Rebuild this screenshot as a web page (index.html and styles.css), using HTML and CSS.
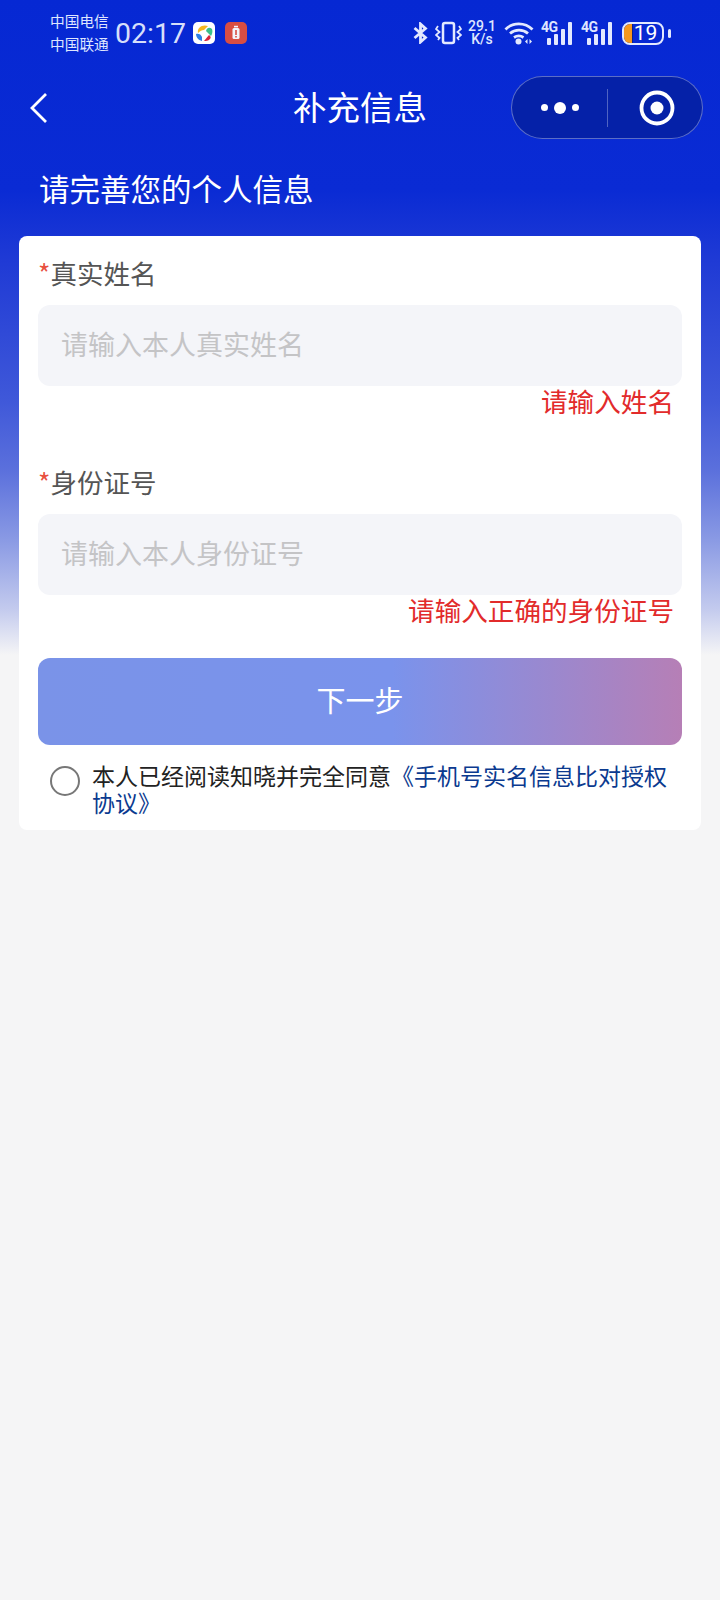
FILE: index.html
```html
<!DOCTYPE html>
<html lang="zh-CN">

<head>
    <meta charset="UTF-8">
    <meta name="viewport" content="width=device-width, initial-scale=1.0">
    <title>补充信息</title>
    <link rel="stylesheet" href="styles.css">
</head>

<body>
    <!-- status bar -->
    <div class="status-bar">
        <div class="carriers">
            <span>中国电信</span>
            <span>中国联通</span>
        </div>
        <div class="clock">02:17</div>
        <svg class="app-icon" width="22" height="22" viewBox="0 0 22 22">
            <rect width="22" height="22" rx="5" fill="#fff" />
            <path d="M5 11C4 6 9 2 15 4L11 8C9 8 7 9 5 11Z" fill="#f5b81f" />
            <path d="M13 9C14 5 17 5 19 7C20 10 19 12 18 14L13 9Z" fill="#3cc08a" />
            <path d="M3 12C5 11 8 12 9 15L9 19C5 18 3 15 3 12Z" fill="#2d7fe6" />
            <path d="M11 19L16 13C18 14 18 16 17 17C15 19 13 19 11 19Z" fill="#d8263c" />
        </svg>
        <svg class="app-icon app-icon-red" width="22" height="22" viewBox="0 0 22 22">
            <rect width="22" height="22" rx="5" fill="#e4503c" />
            <rect x="7.500" y="6" width="7" height="11" rx="1.500" fill="#fff" />
            <rect x="9" y="3.800" width="4" height="1.600" fill="#fff" />
            <rect x="10.200" y="8" width="1.600" height="5" fill="#e4503c" />
            <rect x="10.200" y="14" width="1.600" height="1.500" fill="#e4503c" />
        </svg>

        <div class="status-icons">
            <svg width="15" height="22" viewBox="0 0 15 22" fill="none" stroke="#e3e9ff" stroke-width="2.800">
                <path d="M1.500 6L12.500 15.500L7.500 20V2L12.500 6.500L1.500 16" />
            </svg>
            <svg class="icon-vibrate" width="27" height="24" viewBox="0 0 27 24" fill="none" stroke="#e3e9ff">
                <rect x="8" y="2" width="11" height="20" rx="2" stroke-width="2.500" />
                <path d="M3 5L1 8L4.500 11L1 14L4.500 17L3 19" stroke-width="1.800" />
                <path d="M24 5L26 8L22.500 11L26 14L22.500 17L24 19" stroke-width="1.800" />
            </svg>
            <div class="net-speed">
                <span>29.1</span>
                <span>K/s</span>
            </div>
            <svg class="icon-wifi" width="30" height="24" viewBox="0 0 30 24" fill="none" stroke="#e3e9ff" stroke-width="2.800">
                <path d="M1.500 8.500C8.500 1 21 1 28.500 8.500" />
                <path d="M6 12.500C11 8 19 8 24 12.500" />
                <path d="M10 16.500C13 14.500 16.500 14.500 19.500 16.500" />
                <circle cx="14.500" cy="20.500" r="3" fill="#e3e9ff" stroke="none" />
                <path d="M23.500 18V23L21 20.500ZM25.500 18V23L28 20.500Z" fill="#e3e9ff" stroke="none" />
            </svg>
            <div class="signal">
                <span class="signal-label">4G</span>
                <span class="bar bar-1"></span>
                <span class="bar bar-2"></span>
                <span class="bar bar-3"></span>
                <span class="bar bar-4"></span>
            </div>
            <div class="signal">
                <span class="signal-label">4G</span>
                <span class="bar bar-1"></span>
                <span class="bar bar-2"></span>
                <span class="bar bar-3"></span>
                <span class="bar bar-4"></span>
            </div>
            <div class="battery">
                <div class="battery-body">
                    <span class="battery-fill"></span>
                    <span class="battery-num">19</span>
                </div>
                <span class="battery-tip"></span>
            </div>
        </div>
    </div>

    <!-- title bar -->
    <div class="nav-bar">
        <svg class="nav-back" width="20" height="32" viewBox="0 0 20 32" fill="none" stroke="#fff" stroke-width="2.800">
            <path d="M17 2L3 16L17 30" />
        </svg>
        <div class="nav-title">补充信息</div>
        <div class="capsule">
            <div class="capsule-dots">
                <span class="dot"></span>
                <span class="dot dot-big"></span>
                <span class="dot"></span>
            </div>
            <span class="capsule-line"></span>
            <svg width="36" height="36" viewBox="0 0 36 36">
                <circle cx="18" cy="18" r="15.500" fill="none" stroke="#fff" stroke-width="3.800" />
                <circle cx="18" cy="18" r="6.500" fill="#fff" />
            </svg>
        </div>
    </div>

    <h1 class="page-tip">请完善您的个人信息</h1>

    <!-- form -->
    <div class="card">
        <div class="field">
            <label class="field-label"><i>*</i>真实姓名</label>
            <div class="field-input">请输入本人真实姓名</div>
            <div class="field-error">请输入姓名</div>
        </div>
        <div class="field">
            <label class="field-label"><i>*</i>身份证号</label>
            <div class="field-input">请输入本人身份证号</div>
            <div class="field-error">请输入正确的身份证号</div>
        </div>
        <button class="next-btn">下一步</button>
        <div class="agree">
            <span class="agree-radio"></span>
            <p>本人已经阅读知晓并完全同意<a href="#">《手机号实名信息比对授权协议》</a></p>
        </div>
    </div>
</body>

</html>
```

FILE: styles.css
```css
* {
    box-sizing: border-box;
}

body {
    margin: 0;
    height: 1600px;
    overflow: hidden;
    font-family: "Noto Sans CJK SC", "Noto Sans", sans-serif;
    background: linear-gradient(180deg, #0628d3 0, #0a2bd4 190px, #1f3ad5 260px, #3f58d9 400px, #5b70dc 470px, #8a9ae4 540px, #c4cbee 610px, #f5f5f6 655px) no-repeat;
    background-color: #f5f5f6;
}

/* status bar */
.status-bar {
    display: flex;
    align-items: center;
    height: 66px;
    padding-left: 50px;
    color: #dfe6ff;
}

.carriers {
    display: flex;
    flex-direction: column;
    width: 65px;
    padding-bottom: 3px;
    font-size: 14.700px;
    line-height: 23px;
    white-space: nowrap;
}

.clock {
    width: 78px;
    font-family: Roboto, sans-serif;
    font-size: 28.500px;
    color: #d6dffa;
}

.app-icon {
    margin-right: 10px;
}

.app-icon-red {
    opacity: .95;
}

.status-icons {
    display: flex;
    align-items: center;
    margin-left: 156px;
}

.icon-vibrate {
    margin-left: 7px;
}

.net-speed {
    display: flex;
    flex-direction: column;
    align-items: center;
    width: 28px;
    margin-left: 6px;
    font-family: Roboto, sans-serif;
    font-size: 14px;
    font-weight: 500;
    line-height: 13px;
}

.icon-wifi {
    margin-left: 8px;
}

.signal {
    position: relative;
    display: flex;
    align-items: flex-end;
    gap: 3px;
    width: 33px;
    height: 23px;
    margin-left: 7px;
    padding-left: 6px;
}

.signal-label {
    position: absolute;
    left: 0;
    top: -1px;
    font-family: Roboto, sans-serif;
    font-size: 14px;
    font-weight: 700;
    letter-spacing: -.5px;
    line-height: 13px;
}

.bar {
    width: 4px;
    background: #e3e9ff;
    border-radius: 1px;
}

.bar-1 {
    height: 7px;
}

.bar-2 {
    height: 11px;
}

.bar-3 {
    height: 16px;
}

.bar-4 {
    height: 23px;
}

.battery {
    display: flex;
    align-items: center;
    gap: 4px;
    margin-left: 8px;
}

.battery-body {
    position: relative;
    display: flex;
    justify-content: center;
    width: 42px;
    height: 23px;
    border: 2px solid #e3e9ff;
    border-radius: 8px;
    overflow: hidden;
}

.battery-fill {
    position: absolute;
    left: 0;
    top: 0;
    bottom: 0;
    width: 9px;
    background: #f5981e;
    border-right: 1px solid #0a1f8c;
}

.battery-num {
    padding-left: 5px;
    font-family: Roboto, sans-serif;
    font-size: 21px;
    line-height: 19px;
    color: #fff;
}

.battery-tip {
    width: 3px;
    height: 9px;
    background: #e3e9ff;
    border-radius: 2px;
}

/* title bar */
.nav-bar {
    display: grid;
    grid-template-columns: minmax(0, 1fr) auto minmax(0, 1fr);
    align-items: center;
    height: 83px;
    padding: 0 17px;
}

.nav-back {
    display: block;
    margin-left: 12px;
}

.nav-title {
    margin-bottom: 4px;
    font-size: 33.500px;
    color: #fff;
}

.capsule {
    display: flex;
    align-items: center;
    justify-self: end;
    flex: none;
    width: 192px;
    height: 63px;
    padding-left: 29px;
    background: #0521a8;
    border: 1px solid rgba(255, 255, 255, .35);
    border-radius: 32px;
}

.capsule-dots {
    display: flex;
    align-items: center;
    gap: 6px;
}

.dot {
    width: 7px;
    height: 7px;
    background: #fff;
    border-radius: 50%;
}

.dot-big {
    width: 12px;
    height: 12px;
}

.capsule-line {
    width: 1px;
    height: 38px;
    margin: 0 31px 0 28px;
    background: rgba(255, 255, 255, .3);
}

.page-tip {
    margin: 0;
    padding: 0 0 0 39px;
    height: 87px;
    font-size: 30.500px;
    font-weight: 400;
    line-height: 79px;
    color: #fff;
}

/* form card */
.card {
    width: 682px;
    height: 594px;
    margin-left: 19px;
    padding: 19px 19px 0;
    background: #fff;
    border-radius: 8px;
}

.field {
    height: 209px;
}

.field-label {
    display: block;
    height: 50px;
    font-size: 26.500px;
    line-height: 36px;
    color: #555;
}

.field-label i {
    font-style: normal;
    color: #e8503f;
}

.field-input {
    height: 81px;
    padding-left: 23px;
    font-size: 27px;
    line-height: 78px;
    color: #c4c4c6;
    background: #f4f5f9;
    border-radius: 12px;
}

.field-error {
    padding-right: 8px;
    font-size: 26.600px;
    line-height: 30px;
    text-align: right;
    color: #e22b2b;
}

.next-btn {
    display: block;
    width: 100%;
    height: 87px;
    margin-top: -15px;
    padding: 0 0 6px;
    font-family: inherit;
    font-size: 29px;
    color: #fff;
    background: linear-gradient(90deg, #7a93e8 0, #7a93ec 55%, #b67fb6 100%);
    border: none;
    border-radius: 12px;
}

.agree {
    display: flex;
    margin-top: 20px;
    padding-left: 12px;
}

.agree-radio {
    flex: none;
    width: 30px;
    height: 30px;
    margin: 1px 12px 0 0;
    border: 2px solid #777;
    border-radius: 50%;
}

.agree p {
    margin: -3px 0 0;
    font-size: 23px;
    line-height: 27px;
    color: #222;
}

.agree a {
    color: #0b3a8f;
    text-decoration: none;
}
```
